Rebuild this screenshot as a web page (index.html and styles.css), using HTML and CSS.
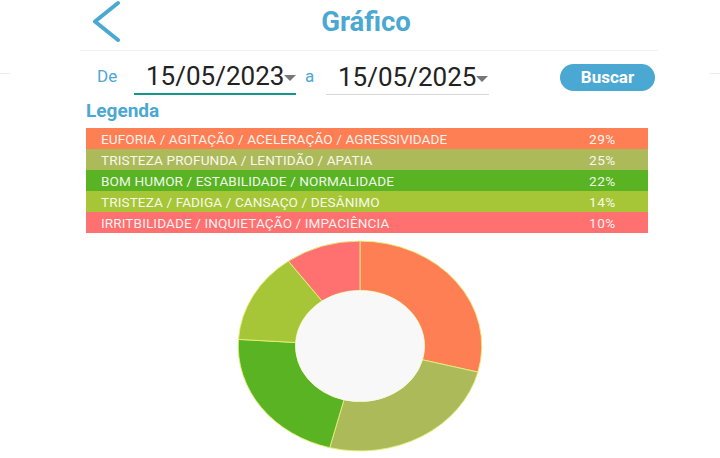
FILE: index.html
```html
<!DOCTYPE html>
<html lang="pt">
<head>
<meta charset="utf-8">
<title>Gráfico</title>
<link rel="stylesheet" href="styles.css">
</head>
<body>
<div class="page">
  <header class="topbar">
    <button class="back" aria-label="Voltar">
      <svg width="30" height="42" viewBox="0 0 30 42"><polyline points="26,3 3,21.5 26,40" fill="none" stroke="#4aa8d3" stroke-width="4" stroke-linecap="round" stroke-linejoin="round"/></svg>
    </button>
    <h1 class="title">Gráfico</h1>
    <span></span>
  </header>

  <div class="content">
    <div class="filters">
      <span class="lbl">De</span>
      <div class="date focused"><span class="val">15/05/2023</span><span class="caret"></span></div>
      <span class="lbl lbl-a">a</span>
      <div class="date"><span class="val">15/05/2025</span><span class="caret"></span></div>
      <button class="search">Buscar</button>
    </div>

    <h2 class="legend-title">Legenda</h2>
    <ul class="legend">
      <li class="c1"><span>EUFORIA / AGITAÇÃO / ACELERAÇÃO / AGRESSIVIDADE</span><span class="pct">29%</span></li>
      <li class="c2"><span>TRISTEZA PROFUNDA / LENTIDÃO / APATIA</span><span class="pct">25%</span></li>
      <li class="c3"><span>BOM HUMOR / ESTABILIDADE / NORMALIDADE</span><span class="pct">22%</span></li>
      <li class="c4"><span>TRISTEZA / FADIGA / CANSAÇO / DESÂNIMO</span><span class="pct">14%</span></li>
      <li class="c5"><span>IRRITBILIDADE / INQUIETAÇÃO / IMPACIÊNCIA</span><span class="pct">10%</span></li>
    </ul>
  </div>

  <div class="chart">
    <svg width="246" height="212" viewBox="-101 -101 202 202" preserveAspectRatio="none">
      <g stroke="#e4f07a" stroke-width="0.8" vector-effect="non-scaling-stroke">
        <path fill="#ff7f55" d="M0,-100 A100,100 0 0 1 96.86,24.87 L51.34,13.18 A53,53 0 0 0 0,-53 Z"/>
        <path fill="#adba5a" d="M96.86,24.87 A100,100 0 0 1 -24.87,96.86 L-13.18,51.34 A53,53 0 0 0 51.34,13.18 Z"/>
        <path fill="#59b323" d="M-24.87,96.86 A100,100 0 0 1 -99.80,-6.28 L-52.90,-3.33 A53,53 0 0 0 -13.18,51.34 Z"/>
        <path fill="#a7c637" d="M-99.80,-6.28 A100,100 0 0 1 -58.78,-80.90 L-31.15,-42.88 A53,53 0 0 0 -52.90,-3.33 Z"/>
        <path fill="#ff7070" d="M-58.78,-80.90 A100,100 0 0 1 0,-100 L0,-53 A53,53 0 0 0 -31.15,-42.88 Z"/>
      </g>
      <circle cx="0" cy="0" r="53" fill="#f8f8f8"/>
    </svg>
  </div>
</div>
</body>
</html>
```

FILE: styles.css
```css
html, body {
  margin: 0;
  padding: 0;
}
body {
  width: 720px;
  height: 458px;
  overflow: hidden;
  font-family: Roboto, "Noto Sans", "Liberation Sans", sans-serif;
  background: #fff linear-gradient(to bottom, transparent 73px, #ececec 73px, #ececec 74px, transparent 74px);
}
.page {
  margin: 0 10px;
  background: #fff;
  height: 458px;
}
.topbar {
  margin-left: 70px;
  width: 578px;
  height: 51px;
  border-bottom: 1px solid #f2f2f2;
  display: grid;
  grid-template-columns: 1fr auto 1fr;
  align-items: start;
  box-sizing: border-box;
}
.back {
  justify-self: start;
  margin: 0 0 0 12px;
  padding: 0;
  border: 0;
  background: none;
  height: 42px;
  display: block;
}
.back svg { display: block; }
.title {
  margin: 6px 6px 0 0;
  font-size: 27.5px;
  font-weight: 700;
  color: #4aa8d3;
  line-height: 32px;
}
.content {
  margin-left: 76px;
  width: 570px;
}
.filters {
  display: flex;
  align-items: center;
  height: 44px;
  margin-top: 0;
}
.lbl {
  font-size: 17px;
  color: #4aa8d3;
  margin-left: 11px;
  width: 37px;
  padding-top: 6px;
}
.lbl-a {
  margin-left: 9px;
  width: 21px;
}
.date {
  display: flex;
  align-items: center;
  box-sizing: border-box;
  width: 163px;
  height: 36px;
  padding-left: 12px;
  border-bottom: 1px solid #d8d8d8;
  margin-top: 8px;
}
.date.focused {
  width: 162px;
  border-bottom: 2px solid #14978a;
}
.date .val {
  font-size: 26px;
  color: #222;
  line-height: 30px;
}
.caret {
  width: 0;
  height: 0;
  border-left: 6px solid transparent;
  border-right: 6px solid transparent;
  border-top: 6px solid #777;
  margin-top: 4px;
}
.search {
  margin-left: auto;
  margin-right: 1px;
  width: 95px;
  height: 27px;
  border: 0;
  border-radius: 14px;
  background: #4aa8d3;
  color: #fff;
  font-family: Roboto, "Noto Sans", sans-serif;
  font-size: 17px;
  font-weight: 700;
  padding: 0;
  margin-top: 8px;
}
.legend-title {
  margin: 5px 0 0 0;
  font-size: 19px;
  font-weight: 700;
  color: #4aa8d3;
  line-height: 22px;
}
.legend {
  list-style: none;
  margin: 6px 0 0 0;
  padding: 0;
  width: 562px;
}
.legend li {
  display: flex;
  height: 21px;
  align-items: center;
  padding-left: 15px;
  font-size: 13.6px;
  color: rgba(255,255,255,0.92);
  letter-spacing: 0.1px;
}
.legend .pct {
  margin-left: auto;
  width: 59px;
  letter-spacing: 0.5px;
}
.c1 { background: #ff7f55; }
.c2 { background: #adba5a; }
.c3 { background: #59b323; }
.c4 { background: #a7c637; }
.c5 { background: #ff7070; }
.chart {
  display: flex;
  justify-content: center;
  margin-top: 7px;
}
.chart svg { display: block; }
```
